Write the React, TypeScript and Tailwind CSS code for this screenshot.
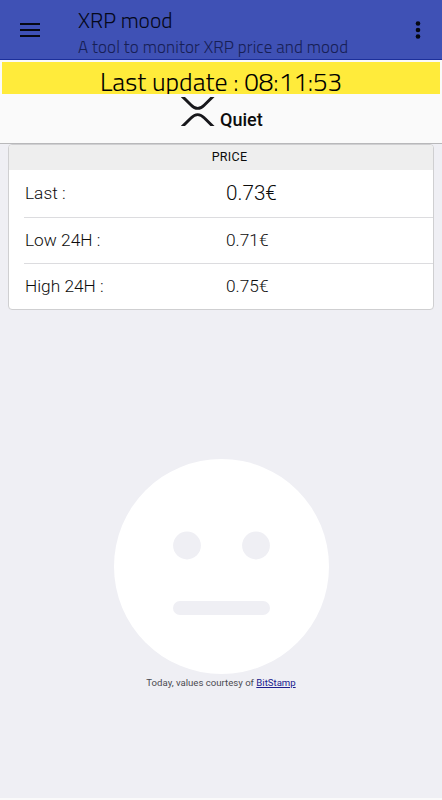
import type { ReactNode } from 'react';

interface PriceRow {
  label: string;
  value: string;
  large?: boolean;
}

const rows: PriceRow[] = [
  { label: 'Last :', value: '0.73€', large: true },
  { label: 'Low 24H :', value: '0.71€' },
  { label: 'High 24H :', value: '0.75€' },
];

function MenuIcon() {
  return (
    <svg width="20" height="14" viewBox="0 0 20 14">
      <path d="M0 1h20M0 7h20M0 13h20" stroke="#060812" strokeWidth="2" />
    </svg>
  );
}

function MoreIcon() {
  return (
    <svg width="6" height="18" viewBox="0 0 6 18" fill="#060812">
      <circle cx="3" cy="2.5" r="2.3" />
      <circle cx="3" cy="9" r="2.3" />
      <circle cx="3" cy="15.5" r="2.3" />
    </svg>
  );
}

function XrpLogo() {
  return (
    <svg width="34" height="29" viewBox="0 0 34 29" fill="none" stroke="#17171b" strokeWidth="2.9">
      <path d="M0.7 -1.2L10 7.9Q16.7 14.8 23.4 7.9L32.7 -1.2" />
      <path d="M0.7 30.2L10 21.1Q16.7 14.2 23.4 21.1L32.7 30.2" />
    </svg>
  );
}

function NeutralFace() {
  return (
    <svg width="215" height="215" viewBox="0 0 215 215">
      <circle cx="107.5" cy="107.5" r="107.5" fill="#fff" />
      <g fill="#efeff4">
        <circle cx="73" cy="86.5" r="13.9" />
        <circle cx="142" cy="86.5" r="13.9" />
        <rect x="59" y="142" width="97" height="14" rx="7" />
      </g>
    </svg>
  );
}

function Header() {
  return (
    <header className="flex h-15 border-b border-[#1c2f9b] bg-[#3f51b5] pl-5">
      <button className="mt-[23px] h-3.5 w-5">
        <MenuIcon />
      </button>
      <div className="ml-[38px] flex-1 whitespace-nowrap pt-[6px] font-['Titillium_Web',sans-serif]">
        <h1 className="h-7 text-[21.5px] font-light leading-7 text-[#05081a]">XRP mood</h1>
        <p className="h-6 pt-px text-[17px] font-light leading-6 tracking-[0.1px] text-[#172055]">
          A tool to monitor XRP price and mood
        </p>
      </div>
      <button className="mr-[21px] mt-[21px] h-[18px] w-1.5">
        <MoreIcon />
      </button>
    </header>
  );
}

function UpdateBanner({ children }: { children: ReactNode }) {
  return (
    <div className="mx-0.5 mt-0.5 h-8 overflow-hidden whitespace-nowrap bg-[#ffeb3b] text-center font-['Titillium_Web',sans-serif] text-[25.9px] font-light leading-[39px] text-black">
      {children}
    </div>
  );
}

export default function App() {
  return (
    <div className="flex h-[800px] w-full flex-col overflow-hidden bg-[#efeff4] font-[Roboto,sans-serif] text-[#0c0c0c]">
      <Header />

      <div className="h-21 shrink-0 border-b border-[#b8b8ba] bg-[#fafafa]">
        <UpdateBanner>Last update : 08:11:53</UpdateBanner>
        <div className="flex pl-[181px] pt-[3px]">
          <XrpLogo />
          <span className="ml-[5px] mt-[11px] text-[18px] font-medium leading-6">Quiet</span>
        </div>
      </div>

      <section className="mx-2 h-[166px] shrink-0 overflow-hidden rounded-[4px] border border-[#cfcfd1] bg-white">
        <h2 className="h-[25px] bg-[#eeeeee] pl-[17px] text-center text-[12.5px] font-[450] leading-6 tracking-[0.3px]">
          PRICE
        </h2>
        <ul>
          {rows.map((row) => (
            <li key={row.label} className="ml-[15px] flex h-[46px] items-center border-b border-[#dcdcdf] font-[350] last:border-b-0 first:h-12">
              <span className="w-[202px] pl-px text-[17.3px]">{row.label}</span>
              <span className={row.large ? 'text-[20.7px]' : 'text-[17.3px]'}>{row.value}</span>
            </li>
          ))}
        </ul>
      </section>

      <div className="mt-[149px] flex flex-col items-center">
        <NeutralFace />
        <p className="mt-[3px] text-[9.6px] leading-3 text-[#4b4b51]">
          Today, values courtesy of{' '}
          <a href="#" className="text-[#20208e] underline">BitStamp</a>
        </p>
      </div>
      <div className="mt-auto h-0.5 shrink-0 bg-[#fafafa]" />
    </div>
  );
}
